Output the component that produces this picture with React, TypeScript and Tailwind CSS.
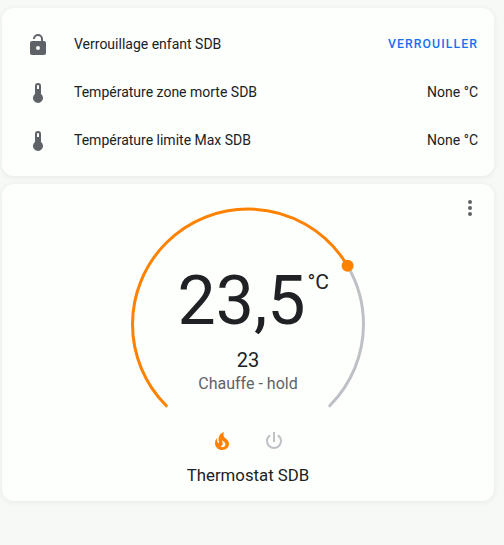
import type { ReactNode } from 'react';

const ICONS = {
  lockOpen:
    'M18,8A2,2 0 0,1 20,10V20A2,2 0 0,1 18,22H6C4.89,22 4,21.1 4,20V10A2,2 0 0,1 6,8H15V6A3,3 0 0,0 12,3A3,3 0 0,0 9,6H7A5,5 0 0,1 12,1A5,5 0 0,1 17,6V8H18M12,17A2,2 0 0,0 14,15A2,2 0 0,0 12,13A2,2 0 0,0 10,15A2,2 0 0,0 12,17Z',
  thermometer:
    'M15 13V5A3 3 0 0 0 9 5V13A5 5 0 1 0 15 13M12 4A1 1 0 0 1 13 5V8H11V5A1 1 0 0 1 12 4Z',
  fire:
    'M17.66 11.2C17.43 10.9 17.15 10.64 16.89 10.38C16.22 9.78 15.46 9.35 14.82 8.72C13.33 7.26 13 4.85 13.95 3C13 3.23 12.17 3.75 11.46 4.32C8.87 6.4 7.85 10.07 9.07 13.22C9.11 13.32 9.15 13.42 9.15 13.55C9.15 13.77 9 13.97 8.8 14.05C8.57 14.15 8.33 14.09 8.14 13.93C8.08 13.88 8.04 13.83 8 13.76C6.87 12.33 6.69 10.28 7.45 8.64C5.78 10 4.87 12.3 5 14.47C5.06 14.97 5.12 15.47 5.29 15.97C5.43 16.57 5.7 17.17 6 17.7C7.08 19.43 8.95 20.67 10.96 20.92C13.1 21.19 15.39 20.8 17.03 19.32C18.86 17.66 19.5 15 18.56 12.72L18.43 12.46C18.22 12 17.66 11.2 17.66 11.2M14.5 17.5C14.22 17.74 13.76 18 13.4 18.1C12.28 18.5 11.16 17.94 10.5 17.28C11.69 17 12.4 16.12 12.61 15.23C12.78 14.43 12.46 13.77 12.33 13C12.21 12.26 12.23 11.63 12.5 10.94C12.69 11.32 12.89 11.7 13.13 12C13.9 13 15.11 13.44 15.37 14.8C15.41 14.94 15.43 15.08 15.43 15.23C15.46 16.05 15.1 16.95 14.5 17.5H14.5Z',
  power:
    'M16.56,5.44L15.11,6.89C16.84,7.94 18,9.83 18,12A6,6 0 0,1 12,18A6,6 0 0,1 6,12C6,9.83 7.16,7.94 8.88,6.88L7.44,5.44C5.36,6.88 4,9.28 4,12A8,8 0 0,0 12,20A8,8 0 0,0 20,12C20,9.28 18.64,6.88 16.56,5.44M13,3H11V13H13',
  dots:
    'M12,16A2,2 0 0,1 14,18A2,2 0 0,1 12,20A2,2 0 0,1 10,18A2,2 0 0,1 12,16M12,10A2,2 0 0,1 14,12A2,2 0 0,1 12,14A2,2 0 0,1 10,12A2,2 0 0,1 12,10M12,4A2,2 0 0,1 14,6A2,2 0 0,1 12,8A2,2 0 0,1 10,6A2,2 0 0,1 12,4Z',
};

function Icon({ name, className }: { name: keyof typeof ICONS; className: string }) {
  return (
    <svg viewBox="0 0 24 24" fill="currentColor" className={`size-6 shrink-0 ${className}`}>
      <path d={ICONS[name]} />
    </svg>
  );
}

function Card({ className, children }: { className: string; children: ReactNode }) {
  return (
    <section className={`rounded-xl bg-[#fdfffc] shadow-[0_1px_6px_rgba(0,0,0,0.07)] ${className}`}>
      {children}
    </section>
  );
}

function Row({ icon, label, children }: { icon: keyof typeof ICONS; label: string; children: ReactNode }) {
  return (
    <div className="flex h-10 items-center">
      <Icon name={icon} className="mt-0.5 text-[#5f6368]" />
      <span className="ml-6 flex-1">{label}</span>
      {children}
    </div>
  );
}

function Dial() {
  return (
    <div className="relative h-[208px] w-[236px]">
      <svg viewBox="0 0 236 208" className="size-full" fill="none" strokeWidth="3" strokeLinecap="round">
        <path d="M217.6 60A115.5 115.5 0 0 1 233.5 118.3A115.5 115.5 0 0 1 199.7 199.8" stroke="#bdc1c6" />
        <path d="M36.3 199.8A115.5 115.5 0 0 1 2.5 118.3A115.5 115.5 0 0 1 118 3A115.5 115.5 0 0 1 217.6 60" stroke="#ff8100" />
        <circle cx="217.6" cy="59.8" r="6" fill="#ff8100" />
      </svg>
      <div className="absolute inset-0 flex flex-col items-center pt-[59px]">
        <div className="relative right-[6.5px] text-[68px] leading-[72px]">
          23,5
          <span className="absolute top-[5px] left-full ml-0.5 text-[21px] leading-6">°C</span>
        </div>
        <div className="mt-[11px] text-xl leading-6">23</div>
        <div className="text-base leading-6 text-[#5f6368]">Chauffe - hold</div>
      </div>
    </div>
  );
}

export default function App() {
  return (
    <main className="flex h-[545px] w-[504px] flex-col gap-2 bg-[#f7f9f6] pt-2 pr-2.5 pl-0.5 font-['Roboto',sans-serif] text-sm text-[#202124]">
      <Card className="flex h-[168px] flex-col gap-2 py-4 pr-4 pl-6">
        <Row icon="lockOpen" label="Verrouillage enfant SDB">
          <button className="h-5 text-[12.25px] leading-5 font-medium tracking-[1.09px] text-[#1a6ff0]">VERROUILLER</button>
        </Row>
        <Row icon="thermometer" label="Température zone morte SDB">
          <span>None °C</span>
        </Row>
        <Row icon="thermometer" label="Température limite Max SDB">
          <span>None °C</span>
        </Row>
      </Card>
      <Card className="relative flex h-[317px] flex-col items-center pt-[22px]">
        <button className="absolute top-3 right-3">
          <Icon name="dots" className="text-[#5f6368]" />
        </button>
        <Dial />
        <div className="mt-[15px] flex gap-7">
          <Icon name="fire" className="text-[#ff8100]" />
          <Icon name="power" className="text-[#bdc1c6]" />
        </div>
        <h2 className="mt-2.5 text-[16.8px] leading-6">Thermostat SDB</h2>
      </Card>
    </main>
  );
}
